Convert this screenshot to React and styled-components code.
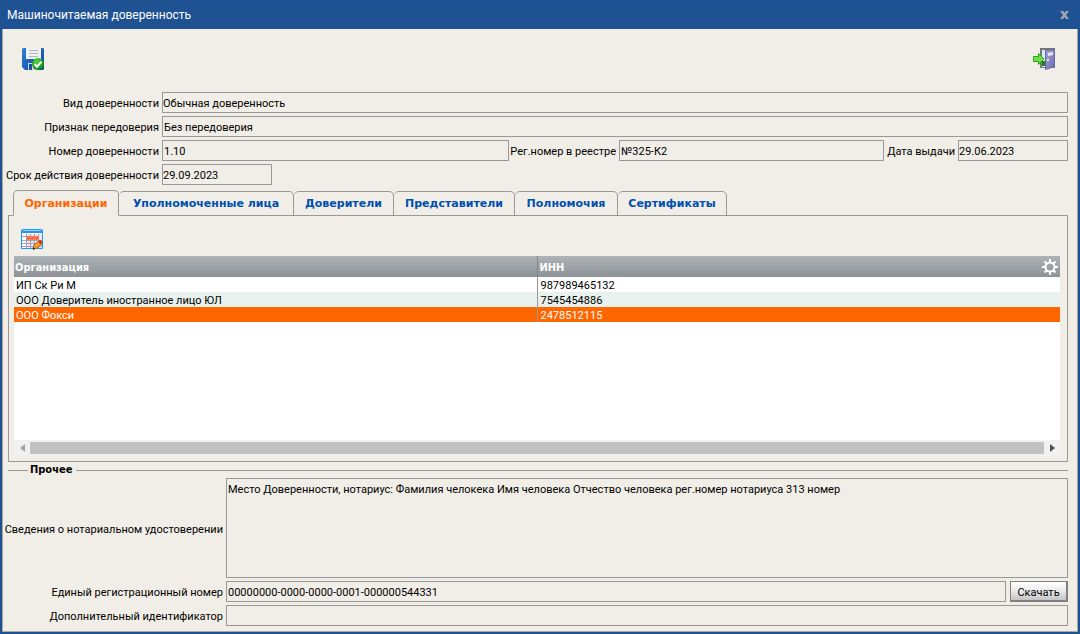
import React, { useState } from 'react'
import styled, { createGlobalStyle, css } from 'styled-components'

const GlobalStyle = createGlobalStyle`
    * {
        box-sizing: border-box;
    }

    body {
        margin: 0;
        background: #1e5292;
        color: #000;
        font-family: Roboto, sans-serif;
        font-size: 11px;
        line-height: 15px;
    }

    button, input, textarea {
        font: inherit;
        color: inherit;
        border-radius: 0;
    }
`

const Dialog = styled.div`
    min-height: 100vh;
    display: flex;
    flex-direction: column;
    padding: 0 2px 2px;
    background: #1e5292;
`

const TitleBar = styled.header`
    height: 29px;
    display: flex;
    align-items: center;
    justify-content: space-between;
    padding: 0 9px 0 5px;
    color: #fff;
`

const Title = styled.h1`
    margin: 0;
    padding-top: 1px;
    font-size: 12px;
    font-weight: normal;
`

const IconButton = styled.button`
    display: flex;
    padding: 0;
    border: 0;
    background: none;
    cursor: pointer;
`

const Body = styled.main`
    flex: 1;
    display: flex;
    flex-direction: column;
    padding: 0 9px 5px 5px;
    border: 1px solid #a9a9a4;
    border-top: 0;
    background: #f1eee7;
`

const Toolbar = styled.div`
    display: flex;
    justify-content: space-between;
    padding: 19px 13px 22px 14px;
`

const Form = styled.div`
    display: flex;
    flex-direction: column;
    gap: 3px;
`

const Row = styled.div`
    display: flex;
    align-items: center;
    gap: 3px;
`

const Label = styled.label`
    flex: none;
    display: flex;
    justify-content: flex-end;
    width: ${props => props.$width}px;
    padding-top: 2px;
    white-space: nowrap;
`

const box = css`
    min-width: 0;
    margin: 0;
    border: 1px solid #999;
    background: transparent;
    outline: 0;
`

const Input = styled.input`
    ${box}
    flex: ${props => props.$flex || '1'};
    height: 21px;
    padding: 2px ${props => (props.$flush ? 0 : 1)}px 0;
`

const TextArea = styled.textarea`
    ${box}
    flex: 1;
    display: block;
    height: 100px;
    padding: 3px 1px;
    resize: none;
`

const Tabs = styled.div`
    display: flex;
    align-items: flex-end;
    height: 26px;
    margin: 5px 0 -1px 5px;
    z-index: 1;
`

const Tab = styled.button`
    min-width: ${props => props.$width}px;
    height: 25px;
    padding: 0 8px;
    border: 1px solid #999;
    border-left-width: ${props => (props.$first ? 1 : 0)}px;
    border-bottom-color: ${props => (props.$active ? '#f1eee7' : '#999')};
    border-radius: 5px 5px 0 0;
    background: #f1eee7;
    color: ${props => (props.$active ? '#ff6600' : '#004eae')};
    font-family: "DejaVu Sans", sans-serif;
    font-weight: bold;
    white-space: nowrap;
    cursor: pointer;
    ${props => props.$active && 'height: 26px;'}
`

const Panel = styled.section`
    flex: 1;
    display: flex;
    flex-direction: column;
    padding: 0 7px 5px 5px;
    border: 1px solid #999;
`

const PanelTools = styled.div`
    padding: 13px 7px 6px;
`

const Grid = styled.div`
    flex: 1;
    min-height: 184px;
    background: #fff;
`

const Table = styled.table`
    width: 100%;
    table-layout: fixed;
    border-collapse: collapse;
`

const HeadRow = styled.tr`
    height: 21px;
    background: linear-gradient(#adb3b6, #8c9295);
    color: #fff;
    font-family: "DejaVu Sans Condensed", "DejaVu Sans", sans-serif;
`

const HeadCell = styled.th`
    padding: 1px 2px 0 1px;
    text-align: left;

    & + & {
        padding-left: 2px;
        border-left: 1px solid #7e8487;
    }
`

const HeadContent = styled.div`
    display: flex;
    align-items: center;
    justify-content: space-between;
`

const BodyRow = styled.tr`
    height: 15px;
    background: ${props => (props.$selected ? '#ff6600' : props.$even ? '#e8f1ee' : '#fff')};
    color: ${props => (props.$selected ? '#fff' : '#000')};
`

const Cell = styled.td`
    padding: 2px 2px 0;
    line-height: 13px;
    white-space: nowrap;

    & + & {
        padding-left: 3px;
        border-left: 1px solid #999;
    }
`

const ScrollBar = styled.div`
    display: flex;
    align-items: center;
    height: 16px;
    background: #f1f1f1;
`

const ScrollArrow = styled.button`
    display: flex;
    align-items: center;
    justify-content: center;
    width: 16px;
    height: 16px;
    padding: 0;
    border: 0;
    background: none;
    color: ${props => (props.disabled ? '#a3a3a3' : '#505050')};
`

const ScrollThumb = styled.div`
    flex: 1;
    height: 12px;
    background: #c1c1c1;
`

const Other = styled.fieldset`
    min-width: 0;
    margin: 0;
    padding: 0;
    border: 0;
    border-top: 1px solid #999;
`

const Legend = styled.legend`
    margin-left: 20px;
    padding: 0 4px 0 2px;
    font-family: "DejaVu Sans Condensed", "DejaVu Sans", sans-serif;
    font-weight: bold;
    line-height: 16px;
`

const DownloadButton = styled.button`
    flex: none;
    width: 58px;
    height: 21px;
    margin-left: 1px;
    padding: 2px 0 0;
    border: 1px solid #808080;
    border-right-width: 2px;
    border-bottom-width: 2px;
    background: linear-gradient(#fff, #f0f0f0 40%, #c4c4c4);
    cursor: pointer;
`

function CloseIcon () {
    return (
        <svg width="9" height="8" viewBox="0 0 9 8">
            <path d="M0 0h3l1.500 2L6 0h3L6 4l3 4H6L4.500 6 3 8H0l3-4z" fill="#a3a8ad" />
        </svg>
    )
}

function SaveIcon () {
    return (
        <svg width="22" height="22" viewBox="0 0 22 22">
            <defs>
                <linearGradient id="disk" x1="0" y1="0" x2="1" y2="1">
                    <stop offset="0" stopColor="#2f7fd8" />
                    <stop offset="1" stopColor="#0b479b" />
                </linearGradient>
                <radialGradient id="check" cx=".4" cy=".3" r=".7">
                    <stop offset="0" stopColor="#57d443" />
                    <stop offset="1" stopColor="#078812" />
                </radialGradient>
            </defs>
            <path d="M1 0h20l1 1v20l-1 1H3l-3-3V1z" fill="url(#disk)" />
            <path d="M4 0h15v11H4z" fill="#eef0f2" />
            <path d="M7 2h9v1H7zM7 5h9v1H7zM7 8h9v1H7z" fill="#b5b8bb" />
            <path d="M6 15h11v7H6z" fill="#c9d7e8" />
            <path d="M7 16h3v6H7z" fill="#154f9d" />
            <circle cx="16" cy="16" r="6" fill="url(#check)" />
            <path d="M12.500 16l2.500 2.700 4.500-5" fill="none" stroke="#fff" strokeWidth="2" />
        </svg>
    )
}

function ExitIcon () {
    return (
        <svg width="22" height="22" viewBox="0 0 22 22">
            <defs>
                <linearGradient id="door" x1="0" y1="0" x2="1" y2="1">
                    <stop offset="0" stopColor="#aaaadd" />
                    <stop offset="1" stopColor="#6868aa" />
                </linearGradient>
            </defs>
            <path d="M7 0h15v20H7z" fill="#777" />
            <path d="M9 2h11v17H9z" fill="#d5efff" />
            <path d="M9 13h4v5H9z" fill="#168c13" />
            <path d="M12.500 2.500l9-1v17l-9 3z" fill="url(#door)" stroke="#6666a0" />
            <path d="M15 5l5-1v3l-5 1z" fill="#e6e6ff" />
            <path d="M14 11h2v2h-2z" fill="#e8e8e8" />
            <path d="M.5 8.500H5.500V5.500l5.500 5.500-5.500 5.500v-3H.5z" fill="#73dc45" stroke="#20a51b" />
        </svg>
    )
}

function EditTableIcon () {
    return (
        <svg width="22" height="21" viewBox="0 0 22 21">
            <rect x=".5" y=".5" width="21" height="19" rx="1" fill="#fff" stroke="#1b97f5" />
            <path d="M1 1h20v3H1z" fill="#2b91e8" />
            <path d="M2 1h18v1H2z" fill="#8dd3ff" />
            <path d="M6 5h15v14H6z" fill="#e9e5fa" />
            <path d="M1 7.500h5M1 11.500h20M1 14.500h20M1 17.500h20M5.500 5v14M9.500 5v14M13.500 5v14M17.500 5v14" stroke="#a5a2b0" />
            <path d="M6 7h12v4H6z" fill="#ff7955" />
            <path d="M6 9h12" stroke="#e75532" strokeDasharray="3 1" />
            <path d="M12 20l1-4 5-4 3 3-5 4z" fill="#ffa21a" stroke="#a85a12" />
            <path d="M17 12l2-1 2 1v2l-2 1z" fill="#d92e1c" />
            <path d="M12 18l2 2-2 1z" fill="#222" />
            <path d="M.5 4v15.500h11M21.500 4v8M21.500 15v4.500H17" fill="none" stroke="#1b97f5" />
        </svg>
    )
}

function GearIcon () {
    return (
        <svg width="16" height="16" viewBox="0 0 16 16" fill="none" stroke="#fff">
            <circle cx="8" cy="8" r="4.500" strokeWidth="2" />
            <path d="M8 0v3M8 13v3M0 8h3M13 8h3M2.500 2.500l2 2M11.500 11.500l2 2M13.500 2.500l-2 2M4.500 11.500l-2 2" strokeWidth="2" />
        </svg>
    )
}

const tabs = [
    { name: 'Организации', width: 106 },
    { name: 'Уполномоченные лица', width: 175 },
    { name: 'Доверители', width: 100 },
    { name: 'Представители', width: 121 },
    { name: 'Полномочия', width: 103 },
    { name: 'Сертификаты', width: 109 },
]

const organizations = [
    { name: 'ИП Ск Ри М', inn: '987989465132' },
    { name: 'ООО Доверитель иностранное лицо ЮЛ', inn: '7545454886' },
    { name: 'ООО Фокси', inn: '2478512115' },
]

export default function App () {
    const [activeTab, setActiveTab] = useState(0)
    const [selected, setSelected] = useState(2)

    return (
        <>
            <GlobalStyle />
            <Dialog>
                <TitleBar>
                    <Title>Машиночитаемая доверенность</Title>
                    <IconButton aria-label="Закрыть"><CloseIcon /></IconButton>
                </TitleBar>
                <Body>
                    <Toolbar>
                        <IconButton aria-label="Сохранить"><SaveIcon /></IconButton>
                        <IconButton aria-label="Выход"><ExitIcon /></IconButton>
                    </Toolbar>

                    <Form>
                        <Row>
                            <Label $width={151} htmlFor="kind">Вид доверенности</Label>
                            <Input id="kind" $flush readOnly value="Обычная доверенность" />
                        </Row>
                        <Row>
                            <Label $width={151} htmlFor="sign">Признак передоверия</Label>
                            <Input id="sign" readOnly value="Без передоверия" />
                        </Row>
                        <Row>
                            <Label $width={151} htmlFor="number">Номер доверенности</Label>
                            <Input id="number" $flex="347 1 347px" readOnly value="1.10" />
                            <Label $width={104} htmlFor="registry">Рег.номер в реестре</Label>
                            <Input id="registry" $flex="265 1 265px" readOnly value="№325-К2" />
                            <Label $width={68} htmlFor="issued">Дата выдачи</Label>
                            <Input id="issued" $flex="0 0 110px" $flush readOnly value="29.06.2023" />
                        </Row>
                        <Row>
                            <Label $width={151} htmlFor="expires">Срок действия доверенности</Label>
                            <Input id="expires" $flex="0 0 110px" $flush readOnly value="29.09.2023" />
                        </Row>
                    </Form>

                    <Tabs role="tablist">
                        {tabs.map((tab, i) => (
                            <Tab
                                key={tab.name}
                                role="tab"
                                aria-selected={i === activeTab}
                                $width={tab.width}
                                $first={i === 0}
                                $active={i === activeTab}
                                onClick={() => setActiveTab(i)}
                            >
                                {tab.name}
                            </Tab>
                        ))}
                    </Tabs>
                    <Panel role="tabpanel">
                        <PanelTools>
                            <IconButton aria-label="Изменить"><EditTableIcon /></IconButton>
                        </PanelTools>
                        <Grid>
                            <Table>
                                <thead>
                                    <HeadRow>
                                        <HeadCell>Организация</HeadCell>
                                        <HeadCell>
                                            <HeadContent>
                                                ИНН
                                                <IconButton aria-label="Настройки"><GearIcon /></IconButton>
                                            </HeadContent>
                                        </HeadCell>
                                    </HeadRow>
                                </thead>
                                <tbody>
                                    {organizations.map((org, i) => (
                                        <BodyRow
                                            key={org.inn}
                                            $even={i % 2 === 1}
                                            $selected={i === selected}
                                            onClick={() => setSelected(i)}
                                        >
                                            <Cell>{org.name}</Cell>
                                            <Cell>{org.inn}</Cell>
                                        </BodyRow>
                                    ))}
                                </tbody>
                            </Table>
                        </Grid>
                        <ScrollBar>
                            <ScrollArrow disabled aria-label="Влево">
                                <svg width="5" height="8" viewBox="0 0 5 8"><path d="M5 0v8L0 4z" fill="currentColor" /></svg>
                            </ScrollArrow>
                            <ScrollThumb />
                            <ScrollArrow aria-label="Вправо">
                                <svg width="5" height="8" viewBox="0 0 5 8"><path d="M0 0v8l5-4z" fill="currentColor" /></svg>
                            </ScrollArrow>
                        </ScrollBar>
                    </Panel>

                    <Other>
                        <Legend>Прочее</Legend>
                        <Form>
                            <Row>
                                <Label $width={215} htmlFor="notary">Сведения о нотариальном удостоверении</Label>
                                <TextArea
                                    id="notary"
                                    readOnly
                                    value="Место Доверенности, нотариус: Фамилия челокека Имя человека Отчество человека рег.номер нотариуса 313 номер"
                                />
                            </Row>
                            <Row>
                                <Label $width={215} htmlFor="unified">Единый регистрационный номер</Label>
                                <Input id="unified" readOnly value="00000000-0000-0000-0001-000000544331" />
                                <DownloadButton>Скачать</DownloadButton>
                            </Row>
                            <Row>
                                <Label $width={215} htmlFor="extra">Дополнительный идентификатор</Label>
                                <Input id="extra" readOnly value="" />
                            </Row>
                        </Form>
                    </Other>
                </Body>
            </Dialog>
        </>
    )
}
